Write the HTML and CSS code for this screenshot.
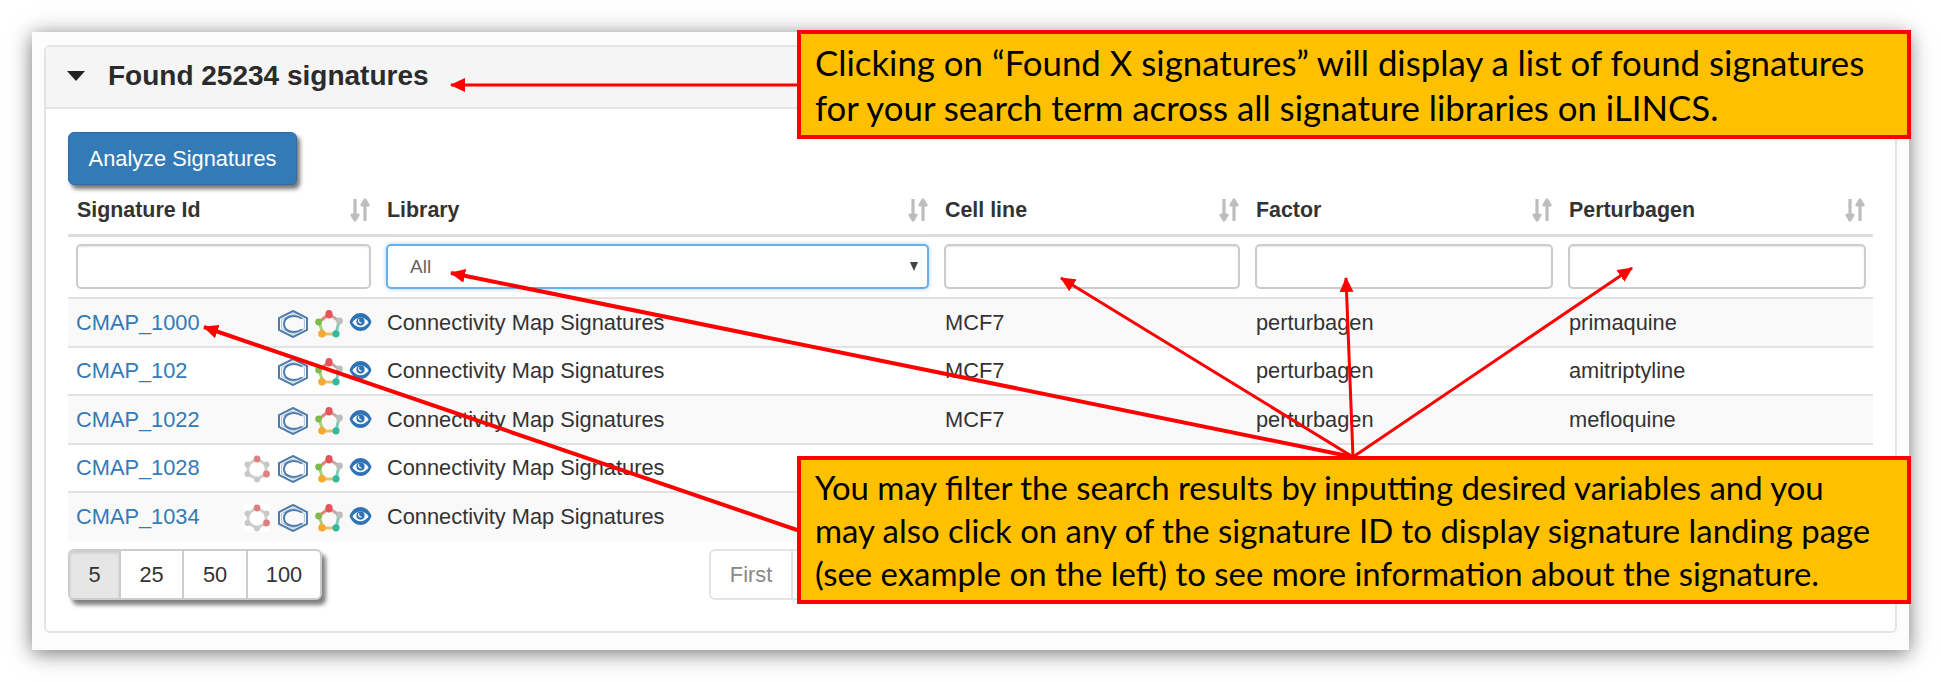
FILE: index.html
```html
<!DOCTYPE html>
<html lang="en">

<head>
    <meta charset="UTF-8" />
    <title>Found signatures</title>
    <link rel="stylesheet" href="styles.css">
</head>

<body>
    <!-- icons used on every row -->
    <svg class="icon-defs" width="0" height="0">
        <symbol id="ic-benzene" viewBox="0 0 30 28">
            <path d="M15 1 L29 8 V20 L15 27 L1 20 V8 Z" fill="none" stroke="#4f7cab" stroke-width="2" />
            <path d="M15 3.8 L26.4 9.5 V18.5 L15 24.2 L3.6 18.5 V9.5 Z" fill="none" stroke="#a8bdd3" stroke-width="1" />
            <path d="M24 8.5 C15 3.5 6 7 6 14 C6 21 15 24.5 24 19.5" fill="none" stroke="#4f7cab" stroke-width="2" />
        </symbol>
        <symbol id="ic-ring" viewBox="0 0 28 28">
            <path d="M14 4 L24 11" stroke="#c9a5a5" stroke-width="3" />
            <path d="M24 11 L21 24" stroke="#7fcab8" stroke-width="3" />
            <path d="M21 24 L8 24" stroke="#e6c06a" stroke-width="3" />
            <path d="M8 24 L4 12" stroke="#a9cf7f" stroke-width="3" />
            <path d="M4 12 L14 4" stroke="#d98a7a" stroke-width="3" />
            <ellipse cx="14" cy="4.2" rx="3.6" ry="4.2" fill="#e8525a" />
            <circle cx="24.5" cy="11" r="3.4" fill="#bdbdbd" />
            <circle cx="21" cy="23.8" r="3.6" fill="#35b99c" />
            <circle cx="7" cy="23.8" r="3.8" fill="#f5a833" />
            <circle cx="3.6" cy="12" r="3.4" fill="#7dbb4e" />
        </symbol>
        <symbol id="ic-eye" viewBox="0 0 24 20">
            <path d="M0.5 10 C5 -2.5 19 -2.5 23.5 10 C19 22.5 5 22.5 0.5 10 Z" fill="#2f73b5" />
            <path d="M3.5 10.5 C8 3.5 16 3.5 20.5 10.5 C16 17 8 17 3.5 10.5 Z" fill="#fff" />
            <circle cx="12" cy="9.5" r="4.3" fill="#2f73b5" />
            <path d="M10.4 7 C9.2 9 10.4 11.4 13.2 11" fill="none" stroke="#fff" stroke-width="1.2" />
        </symbol>
        <symbol id="ic-grey" viewBox="0 0 26 28">
            <path d="M13 4 L22 9.5 V19 L13 24 L4 19 V9.5 Z" fill="none" stroke="#d0d0d0" stroke-width="3" />
            <circle cx="13" cy="4" r="3.4" fill="#dd8080" />
            <circle cx="22.5" cy="9.5" r="3" fill="#c8c8c8" />
            <circle cx="22.5" cy="19" r="3.4" fill="#dd8080" />
            <circle cx="13" cy="24.5" r="3" fill="#c8c8c8" />
            <circle cx="3.5" cy="19" r="3" fill="#c8c8c8" />
            <circle cx="3.5" cy="9.5" r="3" fill="#c8c8c8" />
        </symbol>
        <symbol id="ic-sort" viewBox="0 0 20 24">
            <path d="M5 1 V17 M2 17 L5 22 L8 17 Z" fill="#bdbdbd" stroke="#bdbdbd" stroke-width="3.2" stroke-linejoin="round" />
            <path d="M15 23 V7 M12 7 L15 2 L18 7 Z" fill="#bdbdbd" stroke="#bdbdbd" stroke-width="3.2" stroke-linejoin="round" />
        </symbol>
    </svg>

    <div class="sheet">
        <main class="card">
            <section class="panel">
                <header class="panel-head">
                    <span class="caret"></span>
                    <h2 class="panel-title">Found 25234 signatures</h2>
                </header>
                <div class="panel-body">
                    <button class="btn-analyze" type="button">Analyze Signatures</button>

                    <table class="sig-table">
                        <colgroup>
                            <col class="col-id">
                            <col class="col-lib">
                            <col class="col-cell">
                            <col class="col-factor">
                            <col class="col-pert">
                        </colgroup>
                        <thead>
                            <tr class="head-row">
                                <th><span class="th-in">Signature Id<svg class="sort"><use href="#ic-sort" /></svg></span></th>
                                <th><span class="th-in">Library<svg class="sort"><use href="#ic-sort" /></svg></span></th>
                                <th><span class="th-in">Cell line<svg class="sort"><use href="#ic-sort" /></svg></span></th>
                                <th><span class="th-in">Factor<svg class="sort"><use href="#ic-sort" /></svg></span></th>
                                <th><span class="th-in">Perturbagen<svg class="sort"><use href="#ic-sort" /></svg></span></th>
                            </tr>
                            <tr class="filter-row">
                                <td><input class="filter" type="text"></td>
                                <td><div class="select-wrap"><select class="filter filter-select"><option>All</option></select></div></td>
                                <td><input class="filter" type="text"></td>
                                <td><input class="filter" type="text"></td>
                                <td><input class="filter" type="text"></td>
                            </tr>
                        </thead>
                        <tbody>
                            <tr>
                                <td><div class="id-cell"><a href="#">CMAP_1000</a><span class="icons">
                                    <svg class="ic ic-b"><use href="#ic-benzene" /></svg><svg class="ic ic-r"><use href="#ic-ring" /></svg><svg class="ic ic-e"><use href="#ic-eye" /></svg></span></div></td>
                                <td>Connectivity Map Signatures</td>
                                <td>MCF7</td>
                                <td>perturbagen</td>
                                <td>primaquine</td>
                            </tr>
                            <tr>
                                <td><div class="id-cell"><a href="#">CMAP_102</a><span class="icons">
                                    <svg class="ic ic-b"><use href="#ic-benzene" /></svg><svg class="ic ic-r"><use href="#ic-ring" /></svg><svg class="ic ic-e"><use href="#ic-eye" /></svg></span></div></td>
                                <td>Connectivity Map Signatures</td>
                                <td>MCF7</td>
                                <td>perturbagen</td>
                                <td>amitriptyline</td>
                            </tr>
                            <tr>
                                <td><div class="id-cell"><a href="#">CMAP_1022</a><span class="icons">
                                    <svg class="ic ic-b"><use href="#ic-benzene" /></svg><svg class="ic ic-r"><use href="#ic-ring" /></svg><svg class="ic ic-e"><use href="#ic-eye" /></svg></span></div></td>
                                <td>Connectivity Map Signatures</td>
                                <td>MCF7</td>
                                <td>perturbagen</td>
                                <td>mefloquine</td>
                            </tr>
                            <tr>
                                <td><div class="id-cell"><a href="#">CMAP_1028</a><span class="icons">
                                    <svg class="ic ic-g"><use href="#ic-grey" /></svg><svg class="ic ic-b"><use href="#ic-benzene" /></svg><svg class="ic ic-r"><use href="#ic-ring" /></svg><svg class="ic ic-e"><use href="#ic-eye" /></svg></span></div></td>
                                <td>Connectivity Map Signatures</td>
                                <td></td>
                                <td></td>
                                <td></td>
                            </tr>
                            <tr>
                                <td><div class="id-cell"><a href="#">CMAP_1034</a><span class="icons">
                                    <svg class="ic ic-g ic-white"><use href="#ic-grey" /></svg><svg class="ic ic-b"><use href="#ic-benzene" /></svg><svg class="ic ic-r"><use href="#ic-ring" /></svg><svg class="ic ic-e"><use href="#ic-eye" /></svg></span></div></td>
                                <td>Connectivity Map Signatures</td>
                                <td></td>
                                <td></td>
                                <td></td>
                            </tr>
                        </tbody>
                    </table>

                    <div class="table-foot">
                        <div class="page-size">
                            <span class="ps-item ps-active">5</span>
                            <span class="ps-item ps-25">25</span>
                            <span class="ps-item ps-50">50</span>
                            <span class="ps-item ps-100">100</span>
                        </div>
                        <div class="pager"><span class="pager-first">First</span></div>
                    </div>
                </div>
            </section>
        </main>

        <!-- annotation layer: arrows and the two yellow notes -->
        <svg class="arrows" width="1941" height="682" viewBox="0 0 1941 682">
            <defs>
                <marker id="head" markerUnits="userSpaceOnUse" markerWidth="16" markerHeight="14" refX="14" refY="7" orient="auto">
                    <path d="M0 0 L15 7 L0 14 Z" fill="#f00" />
                </marker>
            </defs>
            <g stroke="#f00" fill="none" marker-end="url(#head)">
                <line x1="800" y1="85" x2="451" y2="85" stroke-width="3" />
                <line x1="1353" y1="457" x2="451" y2="273" stroke-width="4" />
                <line x1="1353" y1="457" x2="1061" y2="278" stroke-width="3" />
                <line x1="1353" y1="457" x2="1346" y2="278" stroke-width="3" />
                <line x1="1353" y1="457" x2="1632" y2="268" stroke-width="3" />
                <line x1="800" y1="531" x2="204" y2="327" stroke-width="4" />
            </g>
        </svg>
        <aside class="note note-top">
            <p>Clicking on “Found X signatures” will display a list of found signatures<br>for your search term across all signature libraries on iLINCS.</p>
        </aside>
        <aside class="note note-bottom">
            <p>You may filter the search results by inputting desired variables and you<br>may also click on any of the signature ID to display signature landing page<br>(see example on the left) to see more information about the signature.</p>
        </aside>
    </div>
</body>

</html>
```

FILE: styles.css
```css
* {
    box-sizing: border-box;
}

body {
    margin: 0;
    background: #fff;
    font-family: "Liberation Sans", Arial, sans-serif;
    font-size: 21.8px;
    color: #333;
}

.icon-defs {
    position: absolute;
}

.sheet {
    position: relative;
    width: 1941px;
    height: 682px;
    padding: 32px 32px 0 32px;
    overflow: hidden;
}

.card {
    width: 1877px;
    height: 618px;
    padding: 13px 12px 17px 12px;
    background: #fcfcfc;
    box-shadow: 0 3px 20px rgba(0, 0, 0, 0.55);
}

.panel {
    height: 588px;
    background: #fff;
    border: 2px solid #e4e4e4;
    border-radius: 6px;
}

.panel-head {
    display: flex;
    align-items: center;
    height: 62px;
    padding: 0 0 2px 21px;
    background: #f5f5f5;
    border-bottom: 2px solid #e4e4e4;
}

.caret {
    width: 0;
    height: 0;
    border-left: 9px solid transparent;
    border-right: 9px solid transparent;
    border-top: 10px solid #222;
    margin-right: 23px;
}

.panel-title {
    margin: 0;
    font-size: 28px;
    font-weight: bold;
    color: #2b2b2b;
}

.panel-body {
    padding: 23px 22px 0 22px;
}

.btn-analyze {
    display: block;
    width: 229px;
    height: 53px;
    padding: 0;
    font-family: inherit;
    font-size: 21.8px;
    color: #fff;
    background: #337ab7;
    border: 1px solid #2e6da4;
    border-radius: 6px;
    box-shadow: 3px 4px 4px rgba(0, 0, 0, 0.55);
}

.sig-table {
    width: 1805px;
    table-layout: fixed;
    border-collapse: collapse;
}

.col-id {
    width: 310px;
}

.col-lib {
    width: 558px;
}

.col-cell {
    width: 311px;
}

.col-factor,
.col-pert {
    width: 313px;
}

.head-row th {
    height: 50px;
    padding: 2px 8px 0 9px;
    text-align: left;
    font-size: 21.4px;
    font-weight: bold;
    border-bottom: 3px solid #ddd;
}

.th-in {
    display: flex;
    justify-content: space-between;
    align-items: center;
}

.sort {
    width: 20px;
    height: 24px;
    flex: none;
}

.filter-row td {
    height: 63px;
    padding: 0 7px 0 8px;
}

.filter {
    display: block;
    width: 100%;
    height: 45px;
    background: #fff;
    border: 2px solid #ccc;
    border-radius: 5px;
    box-shadow: inset 0 1px 2px rgba(0, 0, 0, 0.1);
}

.select-wrap {
    position: relative;
}

/* the select's little arrow */
.select-wrap::after {
    content: "";
    position: absolute;
    top: 18px;
    right: 11px;
    border-left: 4px solid transparent;
    border-right: 4px solid transparent;
    border-top: 9px solid #444;
}

.filter-select {
    padding-left: 22px;
    font-family: inherit;
    font-size: 19px;
    color: #666;
    border-color: #66afe9;
    box-shadow: 0 0 4px rgba(102, 175, 233, 0.6);
    appearance: none;
}

tbody tr {
    height: 48.5px;
}

tbody td {
    padding: 1px 8px 0 9px;
    border-top: 2px solid #e2e2e2;
    white-space: nowrap;
}

tbody td:first-child {
    padding-left: 8px;
}

tbody tr:nth-child(odd) {
    background: #f9f9f9;
}

.id-cell {
    display: flex;
    align-items: center;
    justify-content: space-between;
}

a {
    color: #337ab7;
    text-decoration: none;
}

.icons {
    display: flex;
    align-items: flex-start;
    margin-right: -2px;
    margin-top: 2px;
}

.ic {
    display: block;
    flex: none;
}

.ic-g {
    width: 26px;
    height: 28px;
    margin-right: 8px;
}

.ic-white {
    background: #fff;
}

.ic-b {
    width: 30px;
    height: 28px;
    margin-right: 7px;
}

.ic-r {
    width: 28px;
    height: 28px;
    margin-right: 6px;
}

.ic-e {
    width: 23px;
    height: 20px;
    margin-top: 2px;
}

.table-foot {
    display: flex;
    margin-top: 8px;
}

.page-size {
    display: flex;
    width: 254px;
    height: 51px;
    background: #fff;
    border: 2px solid #ccc;
    border-radius: 6px;
    box-shadow: 4px 5px 4px rgba(0, 0, 0, 0.5);
}

.ps-item {
    display: flex;
    align-items: center;
    justify-content: center;
    padding-top: 1px;
    border-right: 2px solid #ccc;
}

.ps-active {
    width: 51px;
    background: #e6e6e6;
    border-radius: 4px 0 0 4px;
    box-shadow: inset 0 2px 3px rgba(0, 0, 0, 0.12);
}

.ps-25 {
    width: 63px;
}

.ps-50 {
    width: 64px;
}

.ps-100 {
    flex: 1;
    border-right: 0;
}

.pager {
    margin-left: 387px;
    width: 200px;
    height: 51px;
    border: 2px solid #e4e4e4;
    border-radius: 6px;
    color: #888;
}

.pager-first {
    display: flex;
    align-items: center;
    justify-content: center;
    width: 82px;
    height: 100%;
    padding-top: 1px;
    border-right: 2px solid #e4e4e4;
}

/* annotation layer */
.arrows {
    position: absolute;
    top: 0;
    left: 0;
    pointer-events: none;
}

.note {
    position: absolute;
    left: 797px;
    width: 1114px;
    display: flex;
    align-items: center;
    padding-left: 14px;
    background: #ffc000;
    border: 4px solid #f00;
    color: #000;
    font-family: Lato, "Noto Sans", sans-serif;
    white-space: nowrap;
}

.note p {
    margin: 0;
}

.note-top {
    top: 30px;
    height: 109px;
    font-size: 34.8px;
    line-height: 45px;
}

.note-bottom {
    top: 456px;
    height: 148px;
    font-size: 32.9px;
    line-height: 43px;
}
```
